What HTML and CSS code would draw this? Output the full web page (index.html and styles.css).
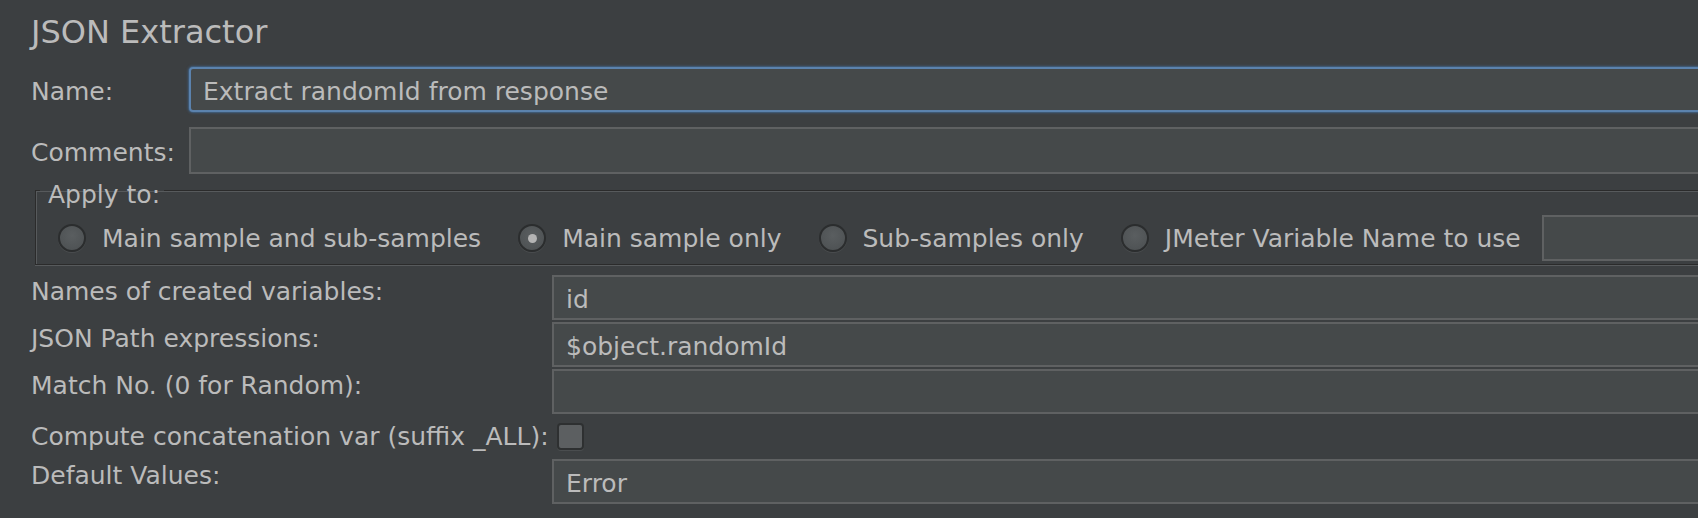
FILE: index.html
```html
<!DOCTYPE html>
<html>
<head>
<meta charset="utf-8">
<link rel="stylesheet" href="styles.css">
</head>
<body>
<div class="panel">
  <h1 class="title">JSON Extractor</h1>
  <div class="row row-name">
    <span class="label">Name:</span>
    <div class="field focused">Extract randomId from response</div>
  </div>
  <div class="row row-comments">
    <span class="label">Comments:</span>
    <div class="field"></div>
  </div>
  <fieldset class="apply">
    <legend class="legend">Apply to:</legend>
    <div class="radios">
      <label class="radio"><span class="dot"></span><span>Main sample and sub-samples</span></label>
      <label class="radio"><span class="dot checked"></span><span>Main sample only</span></label>
      <label class="radio"><span class="dot"></span><span>Sub-samples only</span></label>
      <label class="radio"><span class="dot"></span><span>JMeter Variable Name to use</span></label>
      <div class="field var-field"></div>
    </div>
  </fieldset>
  <div class="grid">
    <span class="glabel">Names of created variables:</span>
    <div class="field">id</div>
    <span class="glabel">JSON Path expressions:</span>
    <div class="field">$object.randomId</div>
    <span class="glabel">Match No. (0 for Random):</span>
    <div class="field"></div>
    <span class="glabel check-label">Compute concatenation var (suffix _ALL):</span>
    <div class="check-cell"><span class="checkbox"></span></div>
    <span class="glabel">Default Values:</span>
    <div class="field">Error</div>
  </div>
</div>
</body>
</html>
```

FILE: styles.css
```css
html, body {
  margin: 0;
  padding: 0;
  background: #3c3f41;
  overflow: hidden;
}
body {
  width: 1698px;
  height: 518px;
  font-family: "DejaVu Sans", "Noto Sans", sans-serif;
  color: #bbbbbb;
}
.panel {
  padding: 0 0 0 31px;
}
.title {
  margin: 0;
  padding: 12px 0 0 0;
  font-size: 32px;
  font-weight: normal;
  line-height: 40px;
  height: 55px;
  box-sizing: border-box;
  color: #bbbbbb;
}
.row {
  display: flex;
  align-items: center;
  margin-right: -20px;
}
.row-name {
  margin-top: 12px;
  height: 45px;
}
.row-comments {
  margin-top: 15px;
  height: 47px;
}
.label {
  width: 158px;
  font-size: 25px;
  flex: none;
  padding-top: 3px;
}
.field {
  flex: 1;
  height: 100%;
  box-sizing: border-box;
  background: #45494a;
  border: 2px solid #5f6162;
  font-size: 25px;
  display: flex;
  align-items: center;
  padding: 4px 0 0 12px;
  color: #bbbbbb;
}
.field.focused {
  border: 2px solid #5b82ad;
  border-radius: 4px;
  box-shadow: 0 0 0 1px #3e5873, 0 0 2px 2px rgba(70, 110, 160, 0.25);
}
.apply {
  margin: 1px -20px 0 4px;
  padding: 0 0 0 22px;
  border: none;
  border-top: 1px solid #2b2b2b;
  border-left: 1px solid #2b2b2b;
  border-bottom: 1px solid #2b2b2b;
  box-shadow: inset 1px 1px 0 #575a5c, 0 1px 0 #575a5c;
  height: 90px;
  box-sizing: border-box;
}
.legend {
  font-size: 25px;
  padding: 9px 4px 0 8px;
  margin-left: -18px;
  line-height: 22px;
}
.radios {
  display: flex;
  align-items: center;
  height: 46px;
  margin-top: 9px;
}
.radio {
  display: flex;
  align-items: center;
  gap: 16px;
  font-size: 25px;
  margin-right: 37px;
}
.dot {
  width: 28px;
  height: 28px;
  border-radius: 50%;
  box-sizing: border-box;
  background: radial-gradient(circle at 50% 40%, #5a5e60, #4b4f51);
  border: 2px solid #2b2d2e;
  box-shadow: 0 1px 0 #4a4d4f;
  display: flex;
  align-items: center;
  justify-content: center;
}
.dot.checked::after {
  content: "";
  width: 9px;
  height: 9px;
  border-radius: 50%;
  background: #b4b4b4;
}
.var-field {
  height: 46px;
  margin-left: -16px;
}
.grid {
  display: grid;
  grid-template-columns: 521px 1fr;
  grid-template-rows: 45px 45px 45px 41px 45px;
  row-gap: 2px;
  margin-top: 10px;
  margin-right: -20px;
}
.glabel {
  font-size: 25px;
  padding-top: 2px;
  line-height: 30px;
}
.check-label {
  padding-top: 6px;
}
.check-cell {
  display: flex;
  align-items: center;
}
.checkbox {
  width: 27px;
  height: 27px;
  margin-left: 5px;
  box-sizing: border-box;
  border: 2px solid #2e3031;
  border-radius: 4px;
  background: #5c5f61;
  box-shadow: 0 1px 0 #4a4d4f;
}
```
